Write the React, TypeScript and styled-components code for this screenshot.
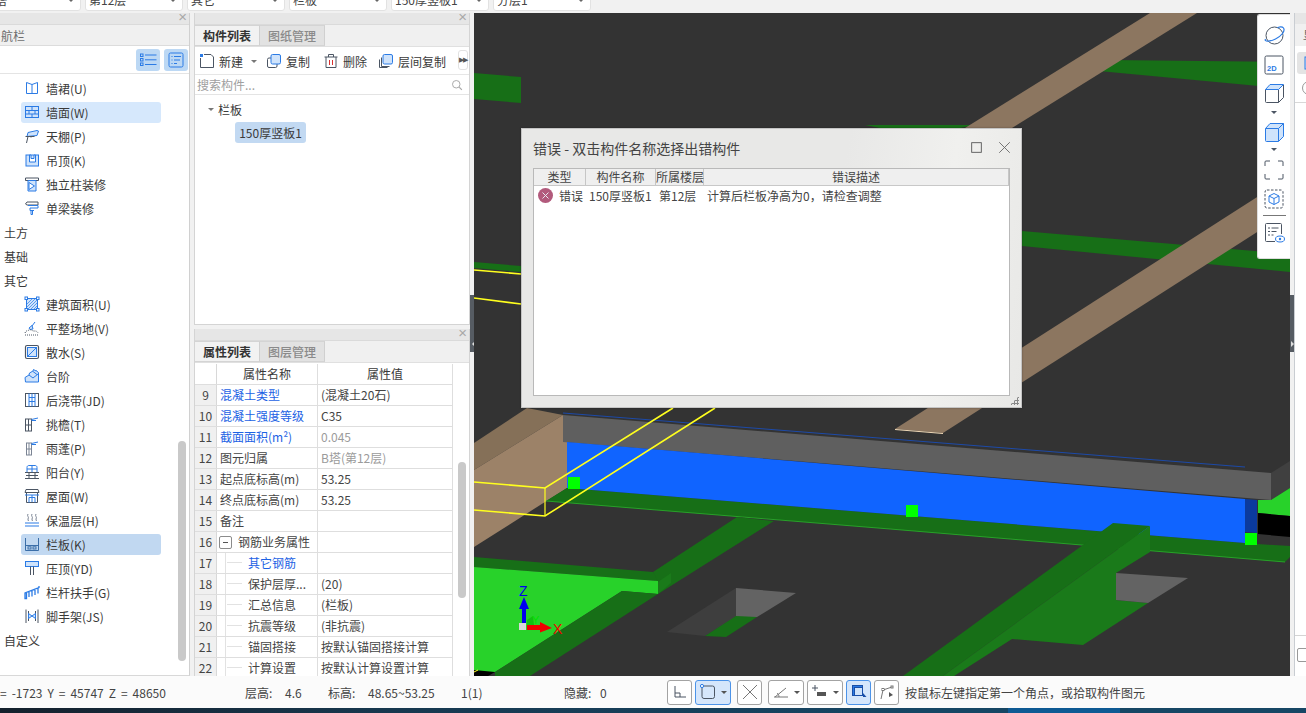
import React from "react";
import styled, { createGlobalStyle } from "styled-components";

const Global = createGlobalStyle`
  html, body { margin: 0; padding: 0; width: 1306px; height: 713px; overflow: hidden; background: #f1f1f1; }
  * { box-sizing: border-box; }
  body { font-family: "Noto Sans CJK SC", "Liberation Sans", sans-serif; font-size: 12px; color: #3a3a3a; }
`;

const DK = "#4b5563";
const BL = "#2b7be5";
const LB = "#cfe3fb";

const Page = styled.div`
  width: 1306px; height: 713px; display: flex; flex-direction: column; overflow: hidden; background: #f1f1f1;
`;
const TopBar = styled.div`
  height: 13px; flex: none; display: flex; gap: 4px; overflow: hidden; margin-left: -17px;
`;
const Combo = styled.div`
  width: 98px; height: 22px; margin-top: -11px; padding: 0 3px; background: #fff; border: 1px solid #e2e2e2;
  border-radius: 3px; line-height: 20px; white-space: nowrap; position: relative; color: #444;
  &::after { content: ""; position: absolute; right: 6px; top: 9px; border: 3px solid transparent; border-top-color: #666; }
`;
const Main = styled.div`
  height: 663px; flex: none; display: flex;
`;
const NavPanel = styled.section`
  width: 190px; flex: none; margin-right: 4px; background: #fff; border-right: 1px solid #d0d0d0; border-bottom: 1px solid #d8d8d8;
  display: flex; flex-direction: column; position: relative; overflow: hidden;
`;
const MidColumn = styled.div`
  width: 276px; flex: none; display: flex; flex-direction: column; gap: 4px;
`;
const Panel = styled.section<{ $h: number }>`
  height: ${(p) => p.$h}px; flex: none; background: #fff; border: 1px solid #d4d4d4; border-top: 0; border-bottom-width: ${(p) => (p.$h > 320 ? 0 : 1)}px;
  display: flex; flex-direction: column; overflow: hidden; position: relative;
`;
const TitleStrip = styled.div`
  height: 12px; flex: none; background: #e6e6e6; position: relative; border-bottom: 1px solid #dadada;
  &::after { content: "×"; position: absolute; right: 2px; top: -5px; font: 15px/18px "Liberation Sans", sans-serif; color: #a8a8a8; }
`;
const NavHead = styled.div`
  height: 21px; flex: none; background: #f0f0f0; border-bottom: 1px solid #dcdcdc; padding-left: 1px; line-height: 21px; color: #6e6e6e; font-size: 12px;
`;
const NavTools = styled.div`
  height: 28px; flex: none; border-bottom: 1px solid #e4e4e4; display: flex; justify-content: flex-end; align-items: center; gap: 4px; padding-right: 1px;
`;
const ToggleBtn = styled.div`
  width: 24px; height: 22px; background: #bcd8f4; border-radius: 3px; display: flex; align-items: center; justify-content: center;
`;
const NavList = styled.div`
  flex: 1; display: flex; flex-direction: column; padding-top: 2px;
`;
const NavItem = styled.div<{ $state?: "hover" | "sel" }>`
  height: 24px; flex: none; display: flex; align-items: center; gap: 6px; padding-left: 3px; margin-left: 21px; width: 140px; position: relative;
  &::before {
    content: ""; position: absolute; left: 0; right: 0; top: 2px; bottom: 1px; border-radius: 3px; z-index: 0;
    background: ${(p) => (p.$state === "sel" ? "#c1d8f1" : p.$state === "hover" ? "#d6e8fc" : "transparent")};
  }
  & > * { position: relative; z-index: 1; }
`;
const NavGroup = styled.div`
  height: 24px; flex: none; line-height: 26px; padding-left: 4px;
`;
const NavScroll = styled.div`
  position: absolute; left: 178px; top: 428px; width: 8px; height: 220px; background: #c9c9c9; border-radius: 4px;
`;
const Tabs = styled.div`
  height: 22px; flex: none; background: #f0f0f0; border-bottom: 1px solid #e0e0e0; display: flex;
`;
const Tab = styled.div<{ $on?: boolean }>`
  width: 65px; text-align: center; line-height: 19px; font-weight: ${(p) => (p.$on ? 700 : 500)};
  color: ${(p) => (p.$on ? "#333" : "#8a8a8a")}; background: ${(p) => (p.$on ? "#f2f2f2" : "#e2e2e2")};
  border-top: 1px solid #d4d4d4; border-right: 1px solid #d0d0d0; border-bottom: 1px solid #d4d4d4;
`;
const ListTools = styled.div`
  height: 28px; flex: none; display: flex; align-items: center; padding: 1px 0 0 4px; position: relative; border-bottom: 1px solid #e6e6e6;
`;
const ToolBtn = styled.div<{ $w: number }>`
  width: ${(p) => p.$w}px; flex: none; display: flex; align-items: center; gap: 4px; white-space: nowrap;
`;
const Caret = styled.span`
  width: 0; height: 0; border: 3px solid transparent; border-top-color: #777; margin: 3px 0 0 4px;
`;
const MoreBtn = styled.div`
  position: absolute; left: 263px; top: 3px; width: 10px; height: 20px; border: 1px solid #e2e2e2; border-radius: 3px;
  font: 7px/18px "Liberation Sans", sans-serif; text-align: center; color: #555; letter-spacing: -1px;
`;
const Search = styled.div`
  height: 20px; flex: none; border-bottom: 1px solid #e4e4e4; padding: 0 6px 0 2px; display: flex; align-items: center; justify-content: space-between; color: #a0a0a0;
`;
const TreeBody = styled.div`
  flex: 1; padding-top: 2px;
`;
const TreeRoot = styled.div`
  height: 24px; margin-bottom: 1px; display: flex; align-items: center; padding-left: 13px; gap: 4px;
`;
const DownTri = styled.span`
  width: 0; height: 0; border: 3.5px solid transparent; border-top-color: #777; margin-top: 4px;
`;
const Chip = styled.div`
  margin-left: 40px; width: 71px; height: 21px; line-height: 21px; text-align: center; background: #c2d9f2; border-radius: 3px; white-space: nowrap;
`;
const TableWrap = styled.div`
  flex: 1; position: relative; overflow: hidden; padding-top: 1px;
`;
const Row = styled.div<{ $head?: boolean }>`
  height: 21px; width: 258px; display: grid; grid-template-columns: 22px 101px 135px; border-bottom: 1px solid #dedede; line-height: 20px;
  text-align: ${(p) => (p.$head ? "center" : "left")};
`;
const IndexCell = styled.div<{ $head?: boolean }>`
  background: ${(p) => (p.$head ? "#fff" : "#f0f0f0")}; border-right: 1px solid #d8d8d8; text-align: center; color: #444; font-size: 12px;
`;
const NameCell = styled.div<{ $blue?: boolean; $indent?: number }>`
  border-right: 1px solid #dedede; color: ${(p) => (p.$blue ? "#1c62e4" : "#444")}; padding-left: ${(p) => p.$indent ?? 3}px; white-space: nowrap; overflow: hidden; position: relative;
  display: flex; align-items: center;
`;
const ValueCell = styled.div<{ $gray?: boolean }>`
  padding-left: 3px; color: ${(p) => (p.$gray ? "#9b9b9b" : "#444")}; white-space: nowrap; border-right: 1px solid #dedede;
`;
const HeadCell = styled.div`
  border-right: 1px solid #dedede; text-align: center;
`;
const TreeLine = styled.span`
  position: absolute; left: 8px; top: 0; bottom: 0; width: 17px;
  border-left: 1px solid #e2e2e2;
  &::after { content: ""; position: absolute; left: 1px; right: 0; top: 9px; border-top: 1px solid #e2e2e2; }
`;
const MinusBox = styled.span`
  width: 13px; height: 13px; border: 1px solid #8b8b8b; border-radius: 2px; margin: 0 6px 0 -1px; flex: none; position: relative;
  &::after { content: ""; position: absolute; left: 3px; right: 3px; top: 5px; border-top: 1px solid #555; }
`;
const TableScroll = styled.div`
  position: absolute; left: 263px; top: 99px; width: 8px; height: 136px; background: #c9c9c9; border-radius: 4px;
`;
const Splitter = styled.div`
  width: 4px; flex: none; background: #f1f1f1; position: relative;
`;
const SplitHandle = styled.div<{ $dir: "l" | "r" }>`
  position: absolute; left: 0; top: 282px; width: 4px; height: 57px; background: #565c63; 
  &::after {
    content: ""; position: absolute; top: 46px; left: ${(p) => (p.$dir === "l" ? -1 : 1)}px; border: 3px solid transparent;
    ${(p) => (p.$dir === "l" ? "border-right-color:#ddd;" : "border-left-color:#ddd;")}
  }
`;
const Viewport = styled.div`
  width: 816px; flex: none; position: relative; background: #333; overflow: hidden;
`;
const Scene = styled.svg`
  display: block; width: 816px; height: 663px;
`;
const Dialog = styled.div`
  position: absolute; left: 47px; top: 115px; width: 501px; height: 280px; background: linear-gradient(100deg, #e8e8e7 60%, #f0f0ee 80%, #e8e8e6);
  border: 1px solid #c4c4c4; display: flex; flex-direction: column; padding: 0 11px 11px 11px; box-shadow: 0 0 2px rgba(0,0,0,.3);
`;
const DialogHead = styled.div`
  height: 37px; margin-bottom: 2px; flex: none; display: flex; align-items: center; justify-content: space-between; font-size: 14px; color: #444;
`;
const WinBtns = styled.div`
  display: flex; align-items: center; gap: 16px; margin-right: -1px;
`;
const ErrTable = styled.div`
  flex: 1; background: #fff; border: 1px solid #b9b9b9; display: flex; flex-direction: column;
`;
const ErrHead = styled.div`
  height: 17px; flex: none; background: #efefef; border-bottom: 1px solid #c8c8c8; display: grid; grid-template-columns: 52px 70px 48px 1fr; line-height: 16px; text-align: center; color: #444;
`;
const ErrHeadCell = styled.div`
  border-right: 1px solid #c6c6c6; white-space: nowrap;
`;
const ErrRow = styled.div`
  height: 19px; margin-top: 0; display: grid; grid-template-columns: 25px 30px 70px 48px 1fr; align-items: center; white-space: nowrap; color: #444;
`;
const ErrIcon = styled.span`
  width: 15px; height: 15px; border-radius: 50%; background: #b25a7c; margin-left: 4px; display: flex; align-items: center; justify-content: center;
`;
const Grip = styled.div`
  position: absolute; right: 2px; bottom: 2px; width: 9px; height: 9px; 
  background: radial-gradient(circle, #888 1px, transparent 1.2px) 0 0 / 3px 3px;
  clip-path: polygon(100% 0, 100% 100%, 0 100%);
`;
const FloatBar = styled.div`
  position: absolute; right: 0; top: 1px; width: 33px; height: 245px; background: #fff; border: 1px solid #ddd; border-right: 0; border-radius: 3px 0 0 3px;
  display: flex; flex-direction: column; align-items: center; padding-top: 10px;
`;
const FloatIcon = styled.div<{ $mb?: number }>`
  height: 21px; width: 21px; flex: none; margin-bottom: ${(p) => p.$mb ?? 8}px; display: flex; align-items: center; justify-content: center;
`;
const FloatTri = styled.span<{ $mb: number }>`
  width: 0; height: 0; border: 3.5px solid transparent; border-top-color: #4b5563; margin: -1px 0 ${(p) => p.$mb}px; flex: none;
`;
const FloatRule = styled.div`
  width: 23px; border-top: 1px solid #777; margin: 0 0 6px; flex: none;
`;
const SidePanel = styled.div`
  flex: 1; background: #fff; border-left: 1px solid #c9cdd2; display: flex; flex-direction: column; overflow: hidden;
`;
const SideTitle = styled.div`
  height: 11px; flex: none; background: #e6e6e6;
`;
const SideHead = styled.div`
  height: 22px; flex: none; background: #f0f0f0; padding-left: 8px; line-height: 22px; white-space: nowrap; color: #666;
`;
const SideTabRow = styled.div`
  height: 33px; flex: none; padding: 6px 0 0 2px;
`;
const SideTab = styled.div`
  width: 30px; height: 22px; background: #e4e4e4; border-radius: 3px 0 0 3px; padding: 4px 0 0 7px;
`;
const SideSearch = styled.div`
  height: 24px; flex: none; border-bottom: 1px solid #d8d8d8; padding: 2px 0 0 7px;
`;
const SideCircle = styled.div`
  width: 14px; height: 14px; border: 1px solid #999; border-radius: 50%;
`;
const SideBody = styled.div`
  height: 533px; flex: none; border-bottom: 1px solid #d4d4d4;
`;
const SideCheck = styled.div`
  width: 20px; height: 14px; margin: 12px 0 0 2px; border: 1px solid #999; border-radius: 2px;
`;
const Status = styled.footer`
  height: 32px; flex: none; background: #fbfbfb; display: flex; align-items: center; position: relative; white-space: nowrap; color: #444;
`;
const StatusCell = styled.span<{ $w: number }>`
  width: ${(p) => p.$w}px; flex: none; word-spacing: ${(p) => (p.$w > 200 ? "2.300px" : "0")};
`;
const SBtn = styled.div<{ $w: number; $on?: boolean; $ml?: number }>`
  width: ${(p) => p.$w}px; height: 25px; flex: none; margin-left: ${(p) => p.$ml ?? 3}px; border-radius: 3px; display: flex; align-items: center; justify-content: center; gap: 5px;
  border: 1px solid ${(p) => (p.$on ? "#4c93e8" : "#a3a3a3")}; background: ${(p) => (p.$on ? "#d5e6fb" : "#fff")};
`;
const SCaret = styled.span`
  width: 0; height: 0; border: 3px solid transparent; border-top-color: #555; margin-top: 3px;
`;
const Hint = styled.span`
  margin-left: 6px; color: #444;
`;
const Taskbar = styled.div`
  height: 5px; flex: none; background: linear-gradient(90deg, #14202c, #17384f 30%, #164664 70%); position: relative;
  &::after { content: ""; position: absolute; left: 1008px; width: 112px; top: 0; bottom: 0; background: #0e5a94; }
`;

const I: React.FC<{ s?: number; children: React.ReactNode }> = ({ s = 16, children }) => (
  <svg width={s} height={s} viewBox="0 0 16 16" fill="none" stroke={DK} strokeWidth="1" style={{ flex: "none" }}>
    {children}
  </svg>
);

const navIcons: Record<string, React.ReactNode> = {
  skirt: <path stroke={BL} d="M2.5 2.5 8 4.5l5.500-2v11H2.500zM8 4.500V13.500" />,
  wall: <g stroke={BL}><rect x="1.500" y="2.500" width="13" height="11" fill={LB} /><path d="M1.500 6.500h13M1.500 10h13M8 2.500v4M5 6.500V10M11 6.500V10M8 10v3.500" /></g>,
  ceil: <g><path stroke={BL} fill={LB} d="M4 4.500 13 2.500 14.500 3 13 7.500 3 8.500z" /><path d="M1.500 8.500h9M4 8.500 2.500 15M7 8.500v1" /></g>,
  susp: <g stroke={BL}><rect x="2" y="3" width="12.500" height="11" fill={LB} /><path fill="#fff" d="M5.500 3h1.500v3.500h3V3h1.500v7h-6z" /></g>,
  col: <g><path d="M1.500 2h13v2.500h-13z" /><path stroke={BL} fill={LB} d="M4 4.500h8V15H4z" /><path stroke={BL} d="M5 6.500 10.500 10 5 13.500z" fill="#fff" /></g>,
  beam: <g><path d="M1.500 4 3 2h11v3H3z" /><path stroke={BL} d="M4 5.500h10V8H6v2.500H10M7 10.500v4h1.500v-4" /></g>,
  area: <g stroke={BL}><rect x="2.500" y="2.500" width="11" height="11" fill={LB} /><path d="M3 8 8 3M3 11l8-8M3 14 14 3M6 14l8-8M9 14l5-5" strokeWidth=".7" /><g fill="#fff"><rect x="1" y="1" width="2.500" height="2.500" /><rect x="12.500" y="1" width="2.500" height="2.500" /><rect x="1" y="12.500" width="2.500" height="2.500" /><rect x="12.500" y="12.500" width="2.500" height="2.500" /></g></g>,
  level: <g><path stroke={BL} fill={LB} d="M5 8 8 5.500 9 9l-3 .5zM8 6l3-4" /><path strokeDasharray="1 1" d="M1 13c1-3 3-2 4-3 2-1 3 1 5 1 2 0 3 0 4.500 2.500M1 15h14" /></g>,
  apron: <g><rect x="1.500" y="1.500" width="13" height="13" rx="1.500" strokeWidth="1.200" /><rect x="3.500" y="3.500" width="9" height="9" stroke={BL} fill={LB} /><path stroke={BL} d="m3.500 12.500 9-9" /></g>,
  stair: <g stroke={BL} fill={LB}><path d="M1 9.500 5 7 5.500 5 9 3l.5-1.500L12 3v-.5l2.500 2V14H1.500z" /><path d="M5 7l4 3 5-4M9 3.500l4 3" /></g>,
  post: <g><rect x="1.500" y="1.500" width="13" height="13" /><g stroke={BL}><path d="M5 1.500v13M11 1.500v13M5 5.500h6M5 9.500h6M8 1.500v13" /></g></g>,
  eave: <g><rect x="1.500" y="3" width="6" height="12" /><path d="M4.500 3v12M1.500 9h6" /><path stroke={BL} d="M7.500 3.500 14 2M7.500 4.500H12" /></g>,
  canopy: <g stroke="#7b8494"><rect x="2.500" y="3" width="5" height="12" /><path d="M5 3v12M2.500 9h5" /><path stroke={BL} d="M7.500 3.500 14 2M7.500 4.500H12" /></g>,
  balcony: <g><path stroke={BL} d="M3 8V3.500C3 2 4 1.500 5 1.500h6c1 0 2 .5 2 2V8M8 1.500V8M3 5h10" /><path d="M1 8.500h14M2 11.500h12M1 14.500h14M5 8.500v6M11 8.500v6" /></g>,
  roof: <g><path d="M2 1.500h12l1 3H1zM2.500 4.500V14.500h11V4.500" /><path stroke={BL} d="M1 7h14M5 9.500h6v5M8 7v7M5 9.500v5" /></g>,
  heat: <g><path stroke="#7b8494" d="M4 2c-1.500 2 1.500 3 0 5 0 1 0 1 .5 2M8 2c-1.500 2 1.500 3 0 5 0 1 0 1 .5 2M12 2c-1.500 2 1.500 3 0 5 0 1 0 1 .5 2" /><path stroke={BL} strokeWidth="1.200" d="M1 11h14M1 14h14" /></g>,
  rail: <g stroke="#3b6ea8"><path d="M1.500 2v12.500h13V2" /><path d="M1.500 9.500h13" /><rect x="4" y="10.800" width="3" height="2.200" /><rect x="9" y="10.800" width="3" height="2.200" /></g>,
  top: <g><rect x="1.500" y="1.500" width="13" height="5" stroke={BL} fill={LB} /><path d="M6.500 6.500V15M9.500 6.500V15" /></g>,
  hand: <g stroke={BL}><path d="M1 14V9l14-5.500V2M1 9v5.500h1.500V8.500M5 7.500V13M8 6.500v6M11 5v6M14 3.500v6" strokeWidth="1.300" /></g>,
  scaf: <g><path d="M2 1.500V15M14 1.500V15M4.500 3v10M11.500 3v10" /><path stroke={BL} fill={LB} d="M4.500 5.500l7 5v-5l-7 5z" /></g>,
};

const navList: [string, string, ("hover" | "sel")?][] = [
  ["skirt", "墙裙(U)"], ["wall", "墙面(W)", "hover"], ["ceil", "天棚(P)"], ["susp", "吊顶(K)"], ["col", "独立柱装修"], ["beam", "单梁装修"],
];
const navList2: [string, string, ("hover" | "sel")?][] = [
  ["area", "建筑面积(U)"], ["level", "平整场地(V)"], ["apron", "散水(S)"], ["stair", "台阶"], ["post", "后浇带(JD)"], ["eave", "挑檐(T)"], ["canopy", "雨蓬(P)"],
  ["balcony", "阳台(Y)"], ["roof", "屋面(W)"], ["heat", "保温层(H)"], ["rail", "栏板(K)", "sel"], ["top", "压顶(YD)"], ["hand", "栏杆扶手(G)"], ["scaf", "脚手架(JS)"],
];

const rows: { n: number; name: string; val?: string; blue?: boolean; gray?: boolean }[] = [
  { n: 9, name: "混凝土类型", val: "(混凝土20石)", blue: true },
  { n: 10, name: "混凝土强度等级", val: "C35", blue: true },
  { n: 11, name: "截面面积(m²)", val: "0.045", blue: true, gray: true },
  { n: 12, name: "图元归属", val: "B塔(第12层)", gray: true },
  { n: 13, name: "起点底标高(m)", val: "53.25" },
  { n: 14, name: "终点底标高(m)", val: "53.25" },
  { n: 15, name: "备注" },
];
const subRows: { n: number; name: string; val?: string; blue?: boolean }[] = [
  { n: 17, name: "其它钢筋", blue: true },
  { n: 18, name: "保护层厚...", val: "(20)" },
  { n: 19, name: "汇总信息", val: "(栏板)" },
  { n: 20, name: "抗震等级", val: "(非抗震)" },
  { n: 21, name: "锚固搭接", val: "按默认锚固搭接计算" },
  { n: 22, name: "计算设置", val: "按默认计算设置计算" },
];

const P: React.FC<{ c: string; p: string }> = ({ c, p }) => <polygon fill={c} points={p} />;
const G1 = "#176f17";
const G2 = "#1a7a1a";
const G3 = "#28d22a";
const TAN = "#8c7660";
const YL = "#ffff1e";

const SceneDrawing = () => (
  <Scene viewBox="474 13 816 663">
    <rect x="474" y="13" width="816" height="663" fill="#333" />
    <P c={G1} p="474,73 521,77 521,103 474,99" />
    <P c={G1} p="1088,70 1108,60 1290,62 1290,89" />
    <P c={G1} p="865,125 975,125 960,128 880,128" />
    <P c={G1} p="1022,231 1290,254 1290,272 1022,246" />
    <P c={G1} p="474,262 521,266 521,272 474,268" />
    <P c={TAN} p="965,128 1012,128 1197,13 1150,13" />
    <P c={TAN} p="895,429 943,433 1290,211 1290,176" />
    <P c="#f0d9b8" p="895,429 943,433 943,434 895,430" />
    <polyline points="474,270 521,274" stroke={YL} strokeWidth="1.600" fill="none" />
    <polyline points="474,298 521,304" stroke={YL} strokeWidth="1.600" fill="none" />

    <P c="#857058" p="474,443 527,408 563,415 474,470" />
    <P c="#9c8268" p="474,470 563,415 563,442 567,442 567,488 474,547" />
    <P c={G1} p="567,488 1245,543 1257,544 1290,546 1290,557 1285,562 890,529 546,501" />
    <polyline points="546,501 890,529 1285,562" stroke="#29b52b" strokeWidth=".8" fill="none" />
    <P c="#5f5f5f" p="563,415 1271,473 1271,500 563,442" />
    <P c="#404040" p="1271,473 1290,461 1290,488 1271,500" />
    <polyline points="563,413 1245,467" stroke="#1d4aa8" strokeWidth="1" fill="none" />
    <P c="#1064ff" p="567,442 1245,499 1245,543 567,488" />
    <P c="#0b3a9e" p="1245,499 1257,500 1257,533 1245,532" />
    <P c={G3} p="1258,500 1271,500 1290,488 1290,516 1258,513" />
    <P c="#000" p="1258,513 1290,516 1290,537 1258,534" />
    <rect x="568" y="477" width="12" height="12" fill="#00ff00" />
    <rect x="906" y="505" width="12" height="12" fill="#00ff00" />
    <rect x="1245" y="533" width="12" height="12" fill="#00ff00" />

    <P c={G1} p="737,517 774,521 658,594 653,572" />
    <P c={G1} p="474,557 653,572 658,581 474,567" />
    <P c={G3} p="474,567 658,581 658,594 622,591 495,672 474,672" />
    <P c={G2} p="658,582 671,573 671,583 658,594" />
    <P c={G1} p="622,591 658,594 530,676 495,676 495,672" />
    <P c="#000" p="474,670 495,672 488,676 474,676" />
    <polyline points="474,672 478,670" stroke={YL} strokeWidth="1" />

    <P c="#3e3e3e" p="736,588 667,632 705,636 736,617" />
    <P c="#636363" p="736,588 796,593 757,617 736,617" />
    <P c={G1} p="736,616 757,617 726,637 705,636" />

    <P c={G1} p="1113,523 1150,526 943,676 903,676" />
    <P c={G2} p="1150,526 1150,552 1116,573 1116,600 1148,603 1083,645 1012,639 954,676 943,676" />
    <P c="#636363" p="1116,573 1188,578 1148,603 1116,600" />

    <polyline points="474,482 545,488 673,408" stroke={YL} strokeWidth="1.600" fill="none" />
    <polyline points="474,510 545,516 715,408" stroke={YL} strokeWidth="1.600" fill="none" />
    <line x1="545" y1="488" x2="545" y2="516" stroke={YL} strokeWidth="1.200" />

    <P c="#12c012" p="527,620 533,616 534,625 527,625" />
    <path d="M524 597 529 609H526V623H522V609H519Z" fill="#0000f0" />
    <path d="M527 625H540V622L552 628 540 632.500V630H527Z" fill="#f00000" />
    <rect x="519" y="623" width="7" height="7" fill="#d8d8d8" />
    <text x="519" y="596" fontSize="14" fill="#0000f0" fontFamily="Liberation Sans">Z</text>
    <text x="553" y="634" fontSize="14" fill="#f00000" fontFamily="Liberation Sans">X</text>
    <text x="532" y="624" fontSize="11" fill="#00e000" fontFamily="Liberation Sans">Y</text>
  </Scene>
);

export default function App() {
  return (
    <Page>
      <Global />
      <TopBar>
        <Combo>B塔</Combo>
        <Combo>第12层</Combo>
        <Combo>其它</Combo>
        <Combo>栏板</Combo>
        <Combo>150厚竖板1</Combo>
        <Combo>分层1</Combo>
      </TopBar>
      <Main>
        <NavPanel>
          <TitleStrip />
          <NavHead>航栏</NavHead>
          <NavTools>
            <ToggleBtn>
              <svg width="17" height="14" viewBox="0 0 17 14" fill="none" stroke={BL}>
                <rect x="0.500" y="1" width="2.500" height="2.500" /><rect x="0.500" y="5.500" width="2.500" height="2.500" /><rect x="0.500" y="10" width="2.500" height="2.500" />
                <path d="M5 2h11.500M5 6.800h11.500M5 11.500h11.500" />
              </svg>
            </ToggleBtn>
            <ToggleBtn>
              <svg width="16" height="16" viewBox="0 0 16 16" fill="none" stroke={BL}>
                <rect x="1" y="1" width="14" height="14" rx="1.500" />
                <path d="M3.500 4.500h1M6 4.500h7M3.500 8h1M6 8h6M3.500 11.500h1M6 11.500h3" />
              </svg>
            </ToggleBtn>
          </NavTools>
          <NavList>
            {navList.map(([k, t, st]) => (
              <NavItem key={t} $state={st}><I>{navIcons[k]}</I><span>{t}</span></NavItem>
            ))}
            <NavGroup>土方</NavGroup>
            <NavGroup>基础</NavGroup>
            <NavGroup>其它</NavGroup>
            {navList2.map(([k, t, st]) => (
              <NavItem key={k} $state={st}><I>{navIcons[k]}</I><span>{t}</span></NavItem>
            ))}
            <NavGroup>自定义</NavGroup>
          </NavList>
          <NavScroll />
        </NavPanel>
        <MidColumn>
          <Panel $h={312}>
            <TitleStrip />
            <Tabs>
              <Tab $on>构件列表</Tab>
              <Tab>图纸管理</Tab>
            </Tabs>
            <ListTools>
              <ToolBtn $w={67}>
                <I><path d="M5 1.500h7l2.500 2.500v10.500h-13V5" /><rect x="1" y="1" width="3" height="3" fill={BL} stroke="none" /></I>
                <span>新建</span><Caret />
              </ToolBtn>
              <ToolBtn $w={57}>
                <I><rect x="1.500" y="5" width="9.500" height="9.500" rx="1.500" /><rect x="5" y="1.500" width="9.500" height="9.500" rx="1.500" stroke={BL} fill={LB} /></I>
                <span>复制</span>
              </ToolBtn>
              <ToolBtn $w={55}>
                <I><path d="M1.500 4h13M5.500 4V1.500h5V4M3 4v10.500h10V4" /><path stroke="#d83030" d="M6.500 7v5M9.500 7v5" /></I>
                <span>删除</span>
              </ToolBtn>
              <ToolBtn $w={70}>
                <I><path d="M3.500 4.500v9h8M1.500 6.500v8h8" /><rect x="5" y="1.500" width="9.500" height="9.500" rx="1.500" stroke={BL} fill={LB} /></I>
                <span>层间复制</span>
              </ToolBtn>
              <MoreBtn>▶▶</MoreBtn>
            </ListTools>
            <Search>
              <span>搜索构件...</span>
              <I s={12}><circle cx="7" cy="7" r="5" stroke="#a8a8a8" strokeWidth="1.300" /><path stroke="#a8a8a8" strokeWidth="1.500" d="m11 11 3.500 3.500" /></I>
            </Search>
            <TreeBody>
              <TreeRoot><DownTri /><span>栏板</span></TreeRoot>
              <Chip>150厚竖板1</Chip>
            </TreeBody>
          </Panel>
          <Panel $h={347}>
            <TitleStrip />
            <Tabs>
              <Tab $on>属性列表</Tab>
              <Tab>图层管理</Tab>
            </Tabs>
            <TableWrap>
              <Row $head>
                <IndexCell $head />
                <HeadCell>属性名称</HeadCell>
                <HeadCell>属性值</HeadCell>
              </Row>
              {rows.map((r) => (
                <Row key={r.n}>
                  <IndexCell>{r.n}</IndexCell>
                  <NameCell $blue={r.blue}>{r.name}</NameCell>
                  <ValueCell $gray={r.gray}>{r.val}</ValueCell>
                </Row>
              ))}
              <Row>
                <IndexCell>16</IndexCell>
                <NameCell><MinusBox />钢筋业务属性</NameCell>
                <ValueCell />
              </Row>
              {subRows.map((r) => (
                <Row key={r.n}>
                  <IndexCell>{r.n}</IndexCell>
                  <NameCell $blue={r.blue} $indent={31}><TreeLine />{r.name}</NameCell>
                  <ValueCell>{r.val}</ValueCell>
                </Row>
              ))}
              <TableScroll />
            </TableWrap>
          </Panel>
        </MidColumn>
        <Splitter><SplitHandle $dir="l" /></Splitter>
        <Viewport>
          <SceneDrawing />
          <FloatBar>
            <FloatIcon>
              <svg width="21" height="21" viewBox="0 0 21 21" fill="none">
                <circle cx="10.500" cy="10.500" r="8.500" stroke={DK} />
                <path stroke={BL} strokeWidth="1.200" d="M1.500 14c-1.500 3 4 3 10 0s10-8 8-11c-1.500-2-5-1-6 0" />
              </svg>
            </FloatIcon>
            <FloatIcon>
              <svg width="20" height="20" viewBox="0 0 20 20" fill="none">
                <rect x="1" y="1" width="18" height="18" rx="1.500" stroke={DK} />
                <text x="3" y="16" fontSize="7.500" fontWeight="700" fill={BL} fontFamily="Liberation Sans">2D</text>
              </svg>
            </FloatIcon>
            <FloatIcon $mb={8}>
              <svg width="21" height="21" viewBox="0 0 21 21" fill="none">
                <path stroke={DK} d="M1.500 6.500V18.500a1 1 0 0 0 1 1H14.500V6.500M14.500 19.500l5-5V2" />
                <path stroke={BL} fill={LB} d="M1.500 6.500 6 1.500h13.500l-5 5z" />
              </svg>
            </FloatIcon>
            <FloatTri $mb={5} />
            <FloatIcon $mb={6}>
              <svg width="21" height="21" viewBox="0 0 21 21" fill={LB} stroke={BL}>
                <path d="M1.500 6.500 6 1.500h13.500v13l-5 5h-12a1 1 0 0 1-1-1z" />
                <path d="M1.500 6.500h13v13M14.500 6.500l5-5" />
              </svg>
            </FloatIcon>
            <FloatTri $mb={5} />
            <FloatIcon>
              <svg width="20" height="20" viewBox="0 0 20 20" fill="none" stroke={DK}>
                <path d="M1 6V2a1 1 0 0 1 1-1h4M14 1h4a1 1 0 0 1 1 1v4M19 14v4a1 1 0 0 1-1 1h-4M6 19H2a1 1 0 0 1-1-1v-4" />
              </svg>
            </FloatIcon>
            <FloatIcon $mb={6}>
              <svg width="20" height="20" viewBox="0 0 20 20" fill="none">
                <rect x="1" y="1" width="18" height="18" rx="2" stroke={DK} strokeDasharray="2.500 1.500" />
                <path stroke={BL} d="m10 4.500 5 2.500v6l-5 2.500-5-2.500V7zM5 7l5 2.500L15 7M10 9.500v6" />
              </svg>
            </FloatIcon>
            <FloatRule />
            <FloatIcon>
              <svg width="21" height="21" viewBox="0 0 21 21" fill="none">
                <path stroke={DK} d="M11 19.500H2.500a1 1 0 0 1-1-1v-16a1 1 0 0 1 1-1h14a1 1 0 0 1 1 1V12" />
                <path stroke={DK} d="M4 6h2M7.500 6h7M4 9.500h2M7.500 9.500h5M4 13h2M7.500 13h2" />
                <ellipse cx="16" cy="17" rx="4.500" ry="3" stroke={BL} />
                <circle cx="16" cy="17" r="1.200" fill={BL} />
              </svg>
            </FloatIcon>
          </FloatBar>
          <Dialog>
            <DialogHead>
              <span>错误 - 双击构件名称选择出错构件</span>
              <WinBtns>
                <I s={11}><rect x="1" y="1" width="14" height="14" stroke="#555" strokeWidth="1.300" /></I>
                <I s={13}><path d="m1.500 1.500 13 13M14.500 1.500l-13 13" stroke="#666" strokeWidth="1.100" /></I>
              </WinBtns>
            </DialogHead>
            <ErrTable>
              <ErrHead>
                <ErrHeadCell>类型</ErrHeadCell>
                <ErrHeadCell>构件名称</ErrHeadCell>
                <ErrHeadCell>所属楼层</ErrHeadCell>
                <ErrHeadCell>错误描述</ErrHeadCell>
              </ErrHead>
              <ErrRow>
                <ErrIcon>
                  <svg width="9" height="9" viewBox="0 0 9 9" stroke="#e8e8f0" strokeWidth="1"><path d="m1.500 1.500 6 6M7.500 1.500l-6 6" /></svg>
                </ErrIcon>
                <span>错误</span>
                <span>150厚竖板1</span>
                <span>第12层</span>
                <span>计算后栏板净高为0，请检查调整</span>
              </ErrRow>
            </ErrTable>
            <Grip />
          </Dialog>
        </Viewport>
        <Splitter><SplitHandle $dir="r" /></Splitter>
        <SidePanel>
          <SideTitle />
          <SideHead>显示设置</SideHead>
          <SideTabRow>
            <SideTab>
              <svg width="14" height="14" viewBox="0 0 14 14" fill={LB} stroke={BL}><rect x="1" y="1" width="12" height="12" /></svg>
            </SideTab>
          </SideTabRow>
          <SideSearch><SideCircle /></SideSearch>
          <SideBody />
          <SideCheck />
        </SidePanel>
      </Main>
      <Status>
        <StatusCell $w={245}>= -1723 Y = 45747 Z = 48650</StatusCell>
        <StatusCell $w={40}>层高:</StatusCell>
        <StatusCell $w={43}>4.6</StatusCell>
        <StatusCell $w={40}>标高:</StatusCell>
        <StatusCell $w={93}>48.65~53.25</StatusCell>
        <StatusCell $w={103}>1(1)</StatusCell>
        <StatusCell $w={36}>隐藏:</StatusCell>
        <StatusCell $w={67}>0</StatusCell>
        <SBtn $w={25} $ml={0}>
          <I><path d="M3 2v11h11M3 9h5v4" /></I>
        </SBtn>
        <SBtn $w={36} $on>
          <svg width="16" height="16" viewBox="0 0 16 16" fill="none"><rect x="2" y="2" width="12.500" height="12.500" rx="2" stroke={DK} /><circle cx="2" cy="2" r="1.600" fill="#fff" stroke={BL} /></svg>
          <SCaret />
        </SBtn>
        <SBtn $w={25} $ml={6}>
          <I><path d="m1 1 14 14M15 1 1 15" stroke="#777" /></I>
        </SBtn>
        <SBtn $w={36} $ml={6}>
          <I><path d="M1 13h14M2 13 13 4M6 13c0-2-1-3-2-4" stroke="#777" /></I>
          <SCaret />
        </SBtn>
        <SBtn $w={36}>
          <I><path d="M3 1v6M0 4h6" /><rect x="5" y="8" width="9" height="4" fill="#555" stroke="none" /></I>
          <SCaret />
        </SBtn>
        <SBtn $w={25} $on>
          <I><rect x="1.500" y="1.500" width="10" height="10" fill={BL} stroke="#1a4fa8" /><rect x="3.500" y="3.500" width="8" height="8" fill={LB} stroke="#1a4fa8" /><path d="m12 9 3.500 4H12z" fill="#1a4fa8" stroke="none" /></I>
        </SBtn>
        <SBtn $w={25}>
          <I><path d="M2 15 4 6l9-3" stroke="#777" /><rect x="3" y="4.500" width="2" height="2" fill="#fff" stroke="#777" /><rect x="12" y="2" width="2" height="2" fill="#fff" stroke="#777" /><path d="m10 8 4 3-4 2z" fill="#555" stroke="none" /></I>
        </SBtn>
        <Hint>按鼠标左键指定第一个角点，或拾取构件图元</Hint>
      </Status>
      <Taskbar />
    </Page>
  );
}
